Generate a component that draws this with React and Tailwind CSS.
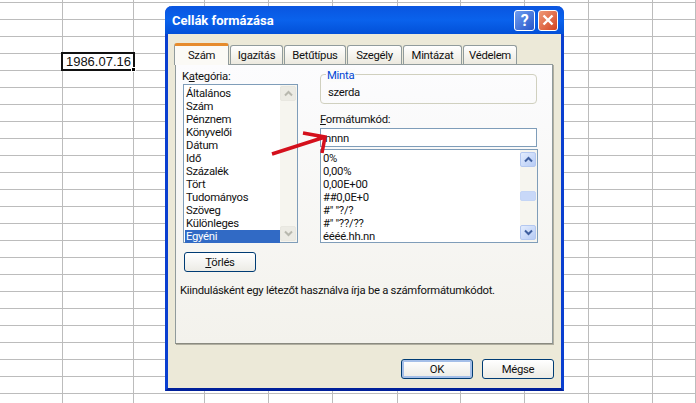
import React from "react";

const columns = Array.from({ length: 11 });
const rows = Array.from({ length: 24 });

const categories = ["Általános", "Szám", "Pénznem", "Könyvelői", "Dátum", "Idő", "Százalék", "Tört", "Tudományos", "Szöveg", "Különleges", "Egyéni"];
const formats = ["0%", "0,00%", "0,00E+00", "##0,0E+0", '#" "?/?', '#" "??/??', "éééé.hh.nn"];
const tabs = [
  { label: "Igazítás", width: "w-[53px]" },
  { label: "Betűtípus", width: "w-[62px]" },
  { label: "Szegély", width: "w-[55px]" },
  { label: "Mintázat", width: "w-[59px]" },
  { label: "Védelem", width: "w-[54px]" },
];

const Chevron = ({ up, color }) => (
  <svg width="9" height="7" viewBox="0 0 9 7">
    <path d={up ? "M1 5.5 L4.5 2 L8 5.5" : "M1 1.5 L4.5 5 L8 1.5"} fill="none" stroke={color} strokeWidth="2" />
  </svg>
);

const ScrollButton = ({ up, disabled }) => (
  <div className={`flex h-[15px] w-[16px] items-center justify-center rounded-[2px] border ${disabled ? "border-[#e8e7e0] bg-[#ecebe4]" : "border-[#b4c8f0] bg-gradient-to-br from-[#e4edfd] to-[#b6cbf5]"}`}>
    <Chevron up={up} color={disabled ? "#b8b8ae" : "#3f5f9f"} />
  </div>
);

const Button = ({ children, isDefault, width }) => (
  <button className={`flex h-[20px] ${width} items-center justify-center rounded-[3px] border border-[#003c74] bg-gradient-to-b from-white to-[#ecebe5] ${isDefault ? "shadow-[inset_0_0_0_2px_#a5bfe8]" : ""}`}>
    {children}
  </button>
);

export default function App() {
  return (
    <div className="relative h-[403px] w-[696px] overflow-hidden bg-white font-['Roboto',sans-serif] text-[11.3px] leading-[13px] tracking-[-0.28px] text-[#111]">
      {/* Sheet grid */}
      <div className="grid grid-cols-[63px_71px_71px_64px_64px_65px_63px_64px_64px_64px_43px] grid-rows-[3px_repeat(24,17px)]">
        {columns.map((_, i) => (
          <div key={i} className="border-r border-b border-[#bcbcbc]" />
        ))}
        {rows.map((_, r) =>
          columns.map((_, c) => (
            <div key={`${r}-${c}`} className="relative border-r border-b border-[#bcbcbc]">
              {r === 3 && c === 1 && (
                <div className="absolute -top-[2px] -left-[2px] -right-[2px] -bottom-[1px] z-10 flex items-center justify-end border-[2px] border-[#111] bg-white pr-[2px] font-['Liberation_Sans',sans-serif] text-[13px] tracking-normal">
                  1986.07.16
                  <div className="absolute -right-[3px] -bottom-[3px] h-[5px] w-[5px] border border-white bg-black" />
                </div>
              )}
            </div>
          ))
        )}
      </div>

      {/* Dialog */}
      <div className="absolute left-[165px] top-[6px] z-20 flex h-[385px] w-[399px] flex-col rounded-t-[7px] border-x-[3px] border-b-[3px] border-x-[#0a3fd0] border-b-[#00209a] bg-[#ece9d8]">
        <div className="-mx-[3px] flex h-[28px] shrink-0 items-center justify-between rounded-t-[7px] bg-gradient-to-b from-[#0a55e0] via-[#0a62ec] to-[#0350d8] pl-[7px] pr-[6px]">
          <span className="text-[13px] font-bold tracking-normal text-white">Cellák formázása</span>
          <div className="flex items-center gap-[3px]">
            <div className="flex h-[21px] w-[21px] items-center justify-center rounded-[3px] border border-white bg-gradient-to-br from-[#6f9df0] to-[#2a55c8] text-[16px] font-bold text-white">?</div>
            <div className="flex h-[21px] w-[20px] items-center justify-center rounded-[3px] border border-white bg-gradient-to-br from-[#ee9a78] to-[#d2401c]">
              <svg width="12" height="12" viewBox="0 0 12 12">
                <path d="M1.5 1.5 L10.5 10.5 M10.5 1.5 L1.5 10.5" stroke="white" strokeWidth="2.4" />
              </svg>
            </div>
          </div>
        </div>

        {/* Tabs */}
        <div className="relative z-10 ml-[6px] mt-[9px] flex h-[21px] shrink-0 items-end">
          <div className="-mb-px flex h-[22px] w-[55px] items-center justify-center rounded-t-[3px] border-x border-t-[3px] border-x-[#919b9c] border-t-[#e68b2c] bg-[#fbfaf6] pb-[1px]">Szám</div>
          <div className="ml-px flex gap-px">
            {tabs.map((tab) => (
              <div key={tab.label} className={`flex h-[19px] ${tab.width} items-center justify-center rounded-t-[3px] border-x border-t border-[#919b9c] bg-gradient-to-b from-white to-[#ece9df]`}>
                {tab.label}
              </div>
            ))}
          </div>
        </div>

        {/* Pane */}
        <div className="ml-[7px] h-[280px] w-[378px] shrink-0 border border-[#919b9c] border-b-[#8a8a80] bg-gradient-to-b from-[#fcfcfe] to-[#f3f2ec] pl-[7px] shadow-[1px_1px_0_#b0aea0]">
          <div className="flex">
            <div className="w-[115px]">
              <div className="mt-[5px] h-[14px] -ml-px">K<span className="underline">a</span>tegória:</div>
              <div className="flex h-[159px] border border-[#7f9db9] bg-white">
                <div className="flex-1 pl-px pt-[2px]">
                  {categories.map((item) => (
                    <div key={item} className={`h-[13px] pl-[1px] ${item === "Egyéni" ? "bg-[#316ac5] text-white" : ""}`}>{item}</div>
                  ))}
                </div>
                <div className="flex w-[17px] flex-col justify-between bg-[#f6f5ef] py-px">
                  <ScrollButton up disabled />
                  <ScrollButton disabled />
                </div>
              </div>
            </div>

            <div className="ml-[22px] w-[218px]">
              <div className="relative mt-[9px] flex h-[30px] w-[217px] items-center rounded-[4px] border border-[#d0d0bf] pl-[7px] pt-[7px]">
                <span className="absolute -top-[6px] left-[5px] bg-[#fbfbfa] px-px text-[#0046d5]">Minta</span>
                szerda
              </div>
              <div className="mt-[9px] h-[15px]"><span className="underline">F</span>ormátumkód:</div>
              <div className="flex h-[19px] w-[217px] items-center border border-[#7f9db9] bg-white pl-[4px] pt-px">nnnn</div>
              <div className="mt-[2px] flex h-[94px] border border-[#7f9db9] bg-white">
                <div className="flex-1 pl-[2px] pt-[2px]">
                  {formats.map((item) => (
                    <div key={item} className="h-[13px]">{item}</div>
                  ))}
                </div>
                <div className="flex w-[17px] flex-col justify-between bg-[#f6f5ef] py-[2px]">
                  <ScrollButton up />
                  <div className="h-[10px] w-[16px] rounded-[2px] border border-[#c4d5f5] bg-[#c8d8f8]" />
                  <ScrollButton />
                </div>
              </div>
            </div>
          </div>

          <div className="mt-[9px]">
            <Button width="w-[72px] ml-px"><span><span className="underline">T</span>örlés</span></Button>
          </div>
          <div className="mt-[12px] -ml-[3px]">Kiindulásként egy létezőt használva írja be a számformátumkódot.</div>
        </div>

        <div className="mt-[15px] flex justify-end gap-[9px] pr-[7px]">
          <Button width="w-[72px]" isDefault>OK</Button>
          <Button width="w-[72px]">Mégse</Button>
        </div>
      </div>

      {/* Red annotation arrow */}
      <svg className="absolute left-[265px] top-[128px] z-30" width="70" height="30" viewBox="0 0 70 30">
        <path d="M7 26 L60 9 M38 5 L60 9 L57 25" fill="none" stroke="#d4101c" strokeWidth="3.5" />
      </svg>
    </div>
  );
}
